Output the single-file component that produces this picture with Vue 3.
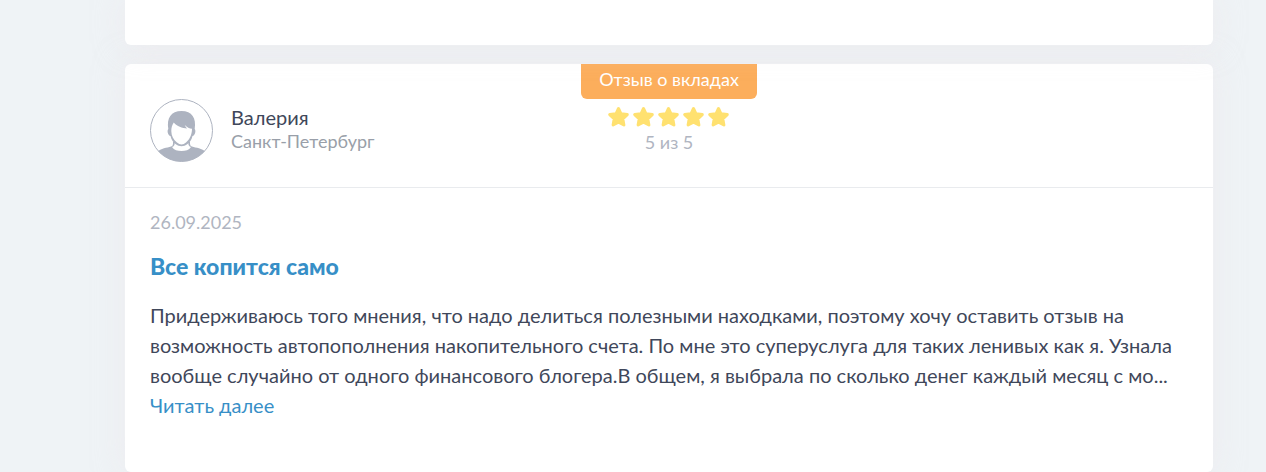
<script setup>
const review = {
  author: 'Валерия',
  city: 'Санкт-Петербург',
  category: 'Отзыв о вкладах',
  rating: 5,
  date: '26.09.2025',
  title: 'Все копится само',
  text: 'Придерживаюсь того мнения, что надо делиться полезными находками, поэтому хочу оставить отзыв на возможность автопополнения накопительного счета. По мне это суперуслуга для таких ленивых как я. Узнала вообще случайно от одного финансового блогера.В общем, я выбрала по сколько денег каждый месяц с мо...'
}
</script>

<template>
  <main class="page">
    <div class="card previous"></div>
    <article class="card">
      <header class="head">
        <div class="person">
          <svg class="avatar" viewBox="0 0 63 63" aria-hidden="true">
            <defs>
              <clipPath id="avatar-clip"><circle cx="31.5" cy="31.5" r="31" /></clipPath>
            </defs>
            <g clip-path="url(#avatar-clip)">
              <path fill="#adb3c0" d="M7 53C11 49 17 49 21 47.500C23 47 23 45.500 23 43H40C40 45.500 40 47 42 47.500C46 49 52 49 56 53V63H7Z" />
              <path fill="#fff" d="M22 48C24 47.500 24.700 46 24.700 44H38.300C38.300 46 39 47.500 41 48C39 51 35.500 52 31.500 52S24 51 22 48Z" />
              <path fill="#adb3c0" d="M18.300 30C16.500 19 21 12 31.500 12S46.500 19 44.700 30C46.300 32 45 36.500 42.500 37C41.500 41 40 43 37.500 45C33.500 48 29.500 48 25.500 45C23 43 21.500 41 20.500 37C18 36.500 16.700 32 18.300 30Z" />
              <path fill="#fff" d="M21.300 32C21.300 29 22 26 23.800 23.500C27 27.500 32 29 37.300 29.500C36 28.500 35.200 27.300 34.800 26C37 28.500 39.500 29.500 42 29.800C42 36 39.500 40.500 36 43.500C33 46 30 46 27 43.500C23.500 40.500 21.300 37 21.300 32Z" />
            </g>
            <circle cx="31.5" cy="31.5" r="31" fill="none" stroke="#adb3c0" />
          </svg>
          <div class="who">
            <div class="name">{{ review.author }}</div>
            <div class="city">{{ review.city }}</div>
          </div>
        </div>
        <div class="score">
          <div class="tag">{{ review.category }}</div>
          <div class="stars" aria-hidden="true">
            <svg v-for="n in review.rating" :key="n" class="star" viewBox="0 0 21 20">
              <path d="M10.500 1.500L13 6.800L19.300 7.600L14.800 11.800L15.900 17.900L10.500 15.200L5.100 17.900L6.200 11.800L1.700 7.600L8 6.800Z" />
            </svg>
          </div>
          <div class="total">{{ review.rating }} из 5</div>
        </div>
      </header>
      <div class="body">
        <time class="date" datetime="2025-09-26">{{ review.date }}</time>
        <h2 class="title">{{ review.title }}</h2>
        <p class="text">{{ review.text }}</p>
        <a class="more" href="#">Читать далее</a>
      </div>
    </article>
  </main>
</template>

<style>
body {
  background: #eff3f6;
}
</style>

<style scoped>
.page {
  box-sizing: border-box;
  padding: 0 53px 0 125px;
  overflow: hidden;
  font-family: Lato, "Open Sans", sans-serif;
  color: #3f475a;
}
.card {
  background: #fff;
  border-radius: 6px;
  box-shadow: 0 0 30px rgba(237, 230, 234, 0.5);
}
.previous {
  position: relative;
  z-index: 1;
  height: 45px;
  margin-bottom: 19px;
  border-radius: 0 0 6px 6px;
}
.head {
  display: grid;
  grid-template-columns: 1fr auto 1fr;
  padding: 0 25px 25px;
  border-bottom: 1px solid #e9ebee;
}
.person {
  display: flex;
  align-items: center;
  gap: 18px;
  padding-top: 35px;
}
.avatar {
  width: 63px;
  height: 63px;
}
.who {
  padding-bottom: 4px;
}
.name {
  font-size: 20px;
  line-height: 24px;
}
.city {
  font-size: 18px;
  line-height: 24px;
  color: #999fa9;
}
.score {
  text-align: center;
}
.tag {
  padding: 0 18px 5px;
  border-radius: 0 0 6px 6px;
  background: #fcae5c;
  color: #fff;
  font-size: 18px;
  line-height: 30px;
}
.stars {
  display: flex;
  justify-content: center;
  gap: 4px;
  padding-top: 8px;
}
.star {
  width: 21px;
  height: 20px;
  overflow: visible;
  fill: #ffe170;
  stroke: #ffe170;
  stroke-width: 3;
  stroke-linejoin: round;
}
.total {
  font-size: 18px;
  line-height: 30px;
  color: #b0b5c1;
}
.body {
  padding: 22px 25px 52px;
}
.date {
  display: block;
  font-size: 18px;
  line-height: 24px;
  color: #b0b5c1;
}
.title {
  margin: 17px 0 19px;
  font-size: 23px;
  line-height: 30px;
  font-weight: 900;
  color: #378fc7;
}
.text {
  margin: 0;
  font-size: 20px;
  line-height: 30px;
}
.more {
  display: block;
  width: fit-content;
  font-size: 20px;
  line-height: 30px;
  color: #378fc7;
  text-decoration: none;
}
</style>
